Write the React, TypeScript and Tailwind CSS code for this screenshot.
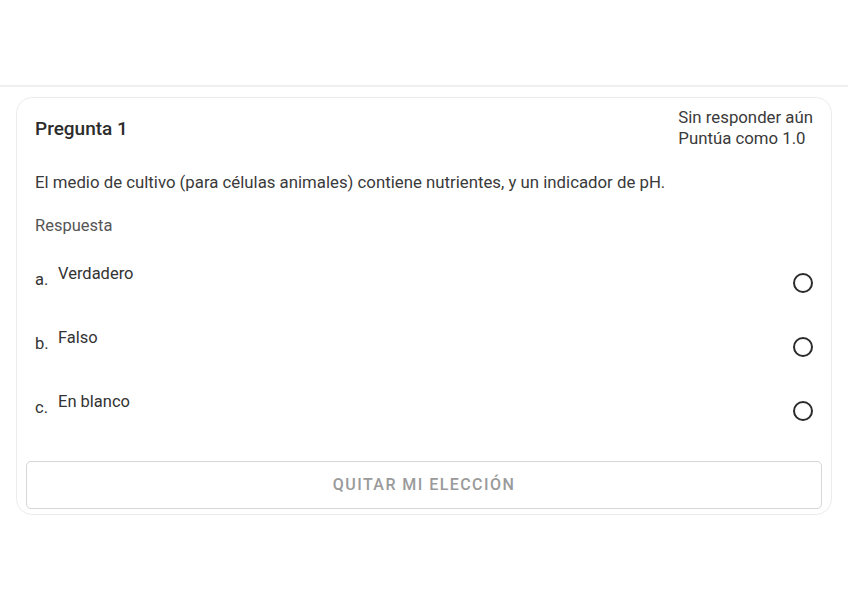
import React, {useState} from 'react';

type Option = { letter: string; label: string };

const options: Option[] = [
  {letter: 'a.', label: 'Verdadero'},
  {letter: 'b.', label: 'Falso'},
  {letter: 'c.', label: 'En blanco'},
];

const Radio: React.FC<{ checked: boolean; onClick: () => void }> = ({checked, onClick}) => (
  <button
    type="button"
    onClick={onClick}
    className="mt-[9px] w-[20px] h-[20px] rounded-full border-2 border-[#2b2b2b] flex items-center justify-center shrink-0"
    aria-checked={checked}
    role="radio"
  >
    {checked && <span className="w-[10px] h-[10px] rounded-full bg-[#2b2b2b]"/>}
  </button>
);

export default function App() {
  const [selected, setSelected] = useState<number | null>(null);

  return (
    <div className="w-[848px] h-[599px] bg-white font-['Roboto',sans-serif] text-[#333]">
      <div className="h-[87px] border-b-2 border-[#efefef]"/>
      <div className="px-4 pt-[10px]">
        <div className="rounded-2xl border border-[#ececec] px-[9px] pt-[9px] pb-[5px]">
          <div className="px-[9px]">
            <div className="flex justify-between items-center">
              <h2 className="text-[19px] leading-[24px] font-medium text-[#2c2c2c] pt-[2px]">Pregunta 1</h2>
              <div className="text-[16.8px] leading-[21px] text-[#3a3a3a]">
                <div>Sin responder aún</div>
                <div>Puntúa como 1.0</div>
              </div>
            </div>

            <p className="mt-[23px] text-[16.8px] leading-[20px] text-[#3a3a3a]">
              El medio de cultivo (para células animales) contiene nutrientes, y un indicador de pH.
            </p>
            <p className="mt-[24px] text-[16.5px] leading-[20px] text-[#555]">Respuesta</p>

            <div className="mt-[28px]">
              {options.map((opt, i) => (
                <div key={opt.letter} className="h-[64px] flex justify-between items-start">
                  <div className="flex items-start text-[16.5px] leading-[20px] text-[#333]">
                    <span className="pt-[6px] w-[23px]">{opt.letter}</span>
                    <span>{opt.label}</span>
                  </div>
                  <Radio checked={selected === i} onClick={() => setSelected(i)}/>
                </div>
              ))}
            </div>
          </div>

          <button
            type="button"
            onClick={() => setSelected(null)}
            className="mt-[5px] w-full h-[48px] rounded-[5px] border border-[#d6d6d6] text-[16px] font-medium tracking-[0.09em] text-[#9a9a9a]"
          >
            QUITAR MI ELECCIÓN
          </button>
        </div>
      </div>
    </div>
  );
}
